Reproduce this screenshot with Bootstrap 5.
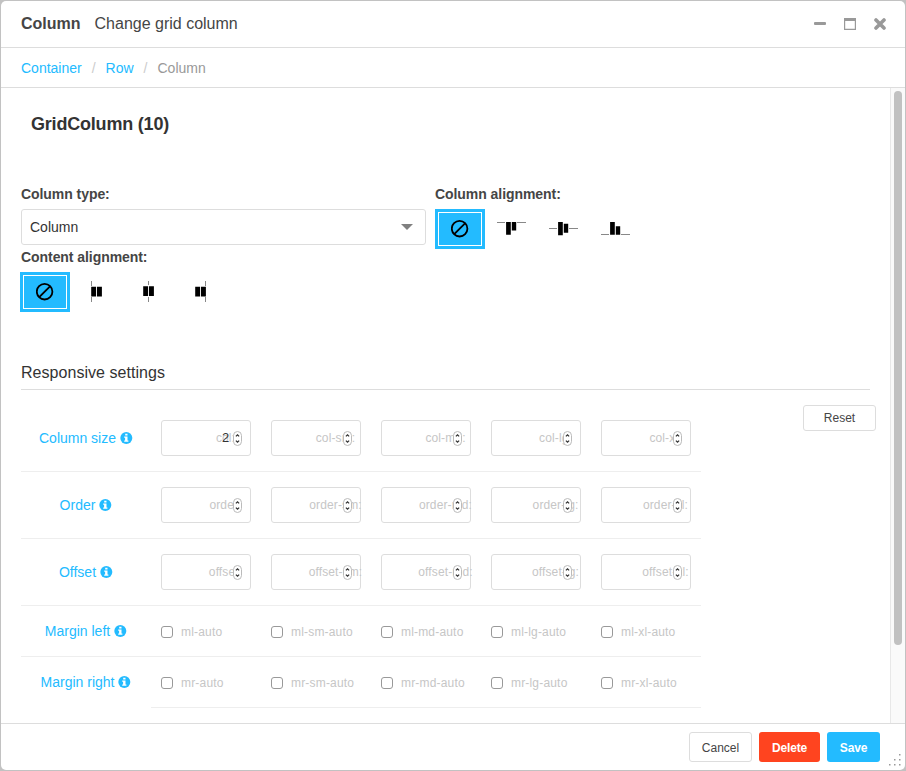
<!DOCTYPE html>
<html lang="en">
<head>
<meta charset="utf-8">
<title>Column</title>
<meta name="viewport" content="width=device-width, initial-scale=1">
<link rel="stylesheet" href="https://cdn.jsdelivr.net/npm/bootstrap@5.3.0/dist/css/bootstrap.min.css">
<style>
:root{--sky:#23bbff;--line:#ddd}
body{font-family:"Liberation Sans",Arial,sans-serif;font-size:14px;line-height:20px;color:#333;background:#c2c2c2;height:771px;padding:1px;overflow:hidden}
svg{display:block}
.dialog{height:769px;width:904px;border-radius:5px;overflow:hidden}
.dlg-head{height:47px;padding:0 19px 0 20px;border-bottom:1px solid var(--line);font-size:16px;color:#454545}
.dlg-head .tools{gap:18px}
.subtitle{margin-left:14px}
.dlg-crumbs{height:40px;padding:0 20px;border-bottom:1px solid var(--line)}
.breadcrumb{--bs-breadcrumb-divider-color:#ccc;--bs-breadcrumb-item-padding-x:10px;--bs-breadcrumb-item-active-color:#999}
.breadcrumb a{color:var(--sky);text-decoration:none}
.dlg-body{height:635px}
.content-pane{padding:0 0 0 20px;width:889px}
.track{width:15px;background:#fafafa;border-left:1px solid #e8e8e8;padding:3px 0 0 3px}
.thumb{width:8px;height:554px;border-radius:4px;background:#c1c1c1}
h3{font-size:18px;line-height:24px;margin:24px 0 0 10px;color:#333;letter-spacing:-.2px}
.fields{margin-top:48px}
.field-type{width:405px;margin-right:9px}
.fld-label{font-weight:bold;color:#454545;line-height:20px;height:25px;letter-spacing:-.06px}
.form-select{height:36px;width:405px;border-color:var(--line);border-radius:3px;font-size:14px;line-height:20px;padding:0 8px;color:#333;background-image:none}
.select-box{height:38px}
.arrow{right:13.5px;top:15px;width:0;height:0;border:6px solid transparent;border-top-color:#808080;border-bottom:0}
.picks{margin-left:-1px}
.pick{width:50px;height:40px;margin-right:2px;border:0;background:none;padding:0}
.pick.on{background:var(--sky);box-shadow:inset 0 0 0 3px var(--sky),inset 0 0 0 4px #fff}
h4{font-size:16px;line-height:26px;margin:48px 0 0;height:30px;width:849px;border-bottom:1px solid var(--line);color:#333;letter-spacing:.04px}
.matrix{width:680px;margin-top:15px}
.mrow{height:67px;border-bottom:1px solid #eee}
.mrow.short{height:51px}
.mrow.final{border-bottom:0}
.mrow.final .cells{border-bottom:1px solid #eee}
.mrow.final .name{padding-bottom:2px}
.name{width:130px;color:var(--sky);gap:4px}
.cell{width:110px;padding:0 10px}
.num{width:90px;height:36px;border:1px solid var(--line);border-radius:3px}
.hint{left:13.5px;width:100px;top:8px;line-height:18px;font-size:12px;letter-spacing:.12px;color:#c6c6c6;text-align:center;white-space:nowrap}
.val{left:60px;top:8px;line-height:18px;font-size:13px;color:#333}
.spin{left:71px;top:10px}
.tick{width:12px;height:12px;border:1px solid #999;border-radius:3px;margin:1px 8px 0 0;background:#fff;appearance:none}
.auto{font-size:12px;color:#c6c6c6;white-space:nowrap;line-height:18px;padding-top:1px;letter-spacing:.18px}
.b-out{background:#fff;border:1px solid var(--line);color:#454545}
.btn{border-radius:3px;font-size:12px;line-height:18px;padding:0}
.reset{width:73px;height:26px;margin:15px 14px 0 0}
.dlg-foot{height:47px;border-top:1px solid var(--line);padding:8px 25px 0 0;gap:7px}
.dlg-foot .btn{height:30px;padding-top:1px}
.w63{width:63px}.w61{width:61px}.w53{width:53px}
.b-del,.b-save{color:#fff;letter-spacing:-.15px}
.b-del{background:#ff441f}.b-save{background:var(--sky)}
.grip{right:4px;bottom:4px}
</style>
<script src="https://cdn.jsdelivr.net/npm/bootstrap@5.3.0/dist/js/bootstrap.bundle.min.js"></script>
</head>
<body>
<svg width="0" height="0" class="position-absolute"><defs>
<symbol id="info" viewBox="0 0 13 12"><circle cx="6.3" cy="6" r="6" fill="#23bbff"/><path d="M5.2 1.7h2.3v1.7H5.2zM4.2 4.4h3.3v4.1h.9v1.3H4.2V8.5h.9V5.7h-.9z" fill="#fff"/></symbol>
<symbol id="none" viewBox="0 0 18 18"><circle cx="8.6" cy="8.7" r="7.8" fill="none" stroke="#000" stroke-width="1.8"/><path d="M3.2 14.1 14 3.3" stroke="#000" stroke-width="1.8"/></symbol>
<symbol id="spinner" viewBox="0 0 9 15"><rect x=".5" y=".5" width="8" height="14" rx="4" fill="#fff" stroke="#bbb"/><path d="M2.9 5.4 4.5 3.8l1.6 1.6M2.9 9.6l1.6 1.6 1.6-1.6" fill="none" stroke="#333" stroke-width="1.3"/></symbol>
</defs></svg>
<div class="dialog bg-white d-flex flex-column position-relative">
  <header class="dlg-head d-flex align-items-center justify-content-between">
    <div class="d-flex"><strong>Column</strong><span class="subtitle">Change grid column</span></div>
    <div class="tools d-flex">
      <svg width="12" height="12"><rect y="4" width="12" height="3" rx="1" fill="#999"/></svg>
      <svg width="12" height="12"><path d="M0 0h12v12H0zM1.2 3v7.8h9.6V3z" fill="#999" fill-rule="evenodd"/></svg>
      <svg width="12" height="12"><path d="M2 2l8 8M10 2l-8 8" stroke="#999" stroke-width="3.6" stroke-linecap="round"/></svg>
    </div>
  </header>
  <nav class="dlg-crumbs d-flex align-items-center"><ol class="breadcrumb mb-0">
    <li class="breadcrumb-item"><a href="#">Container</a></li><li class="breadcrumb-item"><a href="#">Row</a></li><li class="breadcrumb-item active">Column</li>
  </ol></nav>
  <main class="dlg-body d-flex overflow-hidden">
    <div class="content-pane">
      <h3 class="fw-bold">GridColumn (10)</h3>
      <div class="fields d-flex">
        <div class="field-type">
          <div class="fld-label">Column type:</div>
          <div class="select-box position-relative"><select class="form-select"><option>Column</option></select><span class="arrow position-absolute"></span></div>
          <div class="fld-label">Content alignment:</div>
          <div class="d-flex picks">
            <button class="pick on"><svg class="mx-auto" width="18" height="18"><use href="#none"/></svg></button>
            <button class="pick"><svg width="50" height="40"><path d="M19.5 9v5M19.5 25v5" stroke="#888"/><path d="M19.2 14.7h4.9v9.8h-4.9zM25 14.7h4.9v9.8H25z"/></svg></button>
            <button class="pick"><svg width="50" height="40"><path d="M24.5 9v4M24.5 25v5" stroke="#888"/><path d="M19.2 14.2h4.9V24h-4.9zM25 14.2h4.9V24H25z"/></svg></button>
            <button class="pick"><svg width="50" height="40"><path d="M29.5 9v5M29.5 25v5" stroke="#888"/><path d="M19.2 14.7h4.9v9.8h-4.9zM25 14.7h4.9v9.8H25z"/></svg></button>
          </div>
        </div>
        <div>
          <div class="fld-label">Column alignment:</div>
          <div class="d-flex">
            <button class="pick on"><svg class="mx-auto" width="18" height="18"><use href="#none"/></svg></button>
            <button class="pick"><svg width="50" height="40"><path d="M10 13.5h8M30 13.5h9" stroke="#888"/><path d="M19.1 13h4.7v12.8h-4.7zM24.8 13h4.4v8.5h-4.4z"/></svg></button>
            <button class="pick"><svg width="50" height="40"><path d="M10 19.5h8M30 19.5h9" stroke="#888"/><path d="M19.1 13h4.7v13.2h-4.7zM24.8 14.8h4.4v9h-4.4z"/></svg></button>
            <button class="pick"><svg width="50" height="40"><path d="M10 25.5h8M30 25.5h9" stroke="#888"/><path d="M19.1 13h4.7v12.8h-4.7zM24.8 17.3h4.4v8.5h-4.4z"/></svg></button>
          </div>
        </div>
      </div>
      <h4 class="fw-normal">Responsive settings</h4>
      <div class="d-flex justify-content-between">
        <div class="matrix" id="matrix"></div>
        <button class="btn b-out reset">Reset</button>
      </div>
    </div>
    <div class="track"><div class="thumb"></div></div>
  </main>
  <footer class="dlg-foot d-flex justify-content-end">
    <button class="btn b-out w63">Cancel</button><button class="btn b-del w61 fw-bold">Delete</button><button class="btn b-save w53 fw-bold">Save</button>
  </footer>
  <svg class="grip position-absolute" width="12" height="12" fill="#999"><path d="M10 0h1.5v1.5H10zM5 5h1.5v1.5H5zM10 5h1.5v1.5H10zM0 10h1.5v1.5H0zM5 10h1.5v1.5H5zM10 10h1.5v1.5H10z"/></svg>
</div>
<script>
const sizes = ['', '-sm', '-md', '-lg', '-xl'];
const rows = [['Column size','col'],['Order','order'],['Offset','offset'],['Margin left','ml'],['Margin right','mr']];
document.getElementById('matrix').innerHTML = rows.map(([name, key], i) => {
  const cells = sizes.map((s, j) => '<div class="cell">' + (i < 3
    ? `<div class="num position-relative"><span class="hint position-absolute">${key}${s}:</span>${i + j === 0 ? '<span class="val position-absolute">2</span>' : ''}<svg class="spin position-absolute" width="9" height="15"><use href="#spinner"/></svg></div>`
    : `<label class="d-flex align-items-center"><input type="checkbox" class="tick flex-shrink-0"><span class="auto">${key}${s}-auto</span></label>`) + '</div>').join('');
  return `<div class="mrow d-flex ${i > 2 ? 'short' : ''} ${i === 4 ? 'final' : ''}"><div class="name d-flex align-items-center justify-content-center"><span>${name}</span><svg width="13" height="12"><use href="#info"/></svg></div><div class="cells d-flex align-items-center">${cells}</div></div>`;
}).join('');
</script>
</body>
</html>
